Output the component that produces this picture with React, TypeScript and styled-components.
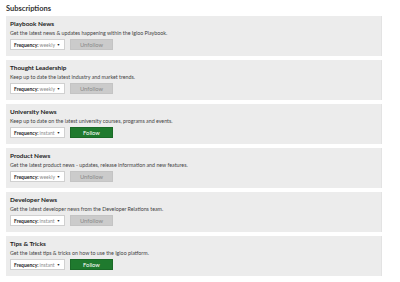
import { FC } from 'react';
import styled, { createGlobalStyle } from 'styled-components';

const Global = createGlobalStyle`
body {
  margin: 0;
  background: #fff;
  font-family: Lato, "Open Sans", sans-serif;
  color: #333;
}
`;

const Page = styled.div`
padding: 4px 6px 6px 6px;
width: 388px;
box-sizing: border-box;
`;

const Heading = styled.h2`
margin: 0 0 3px 0;
font-size: 7.5px;
line-height: 9px;
font-weight: 700;
color: #333;
`;

const List = styled.div`
display: flex;
flex-direction: column;
gap: 4px;
`;

const Card = styled.div`
background: #ececec;
border-right: 1px solid #e3e3e3;
height: 40px;
box-sizing: border-box;
padding: 4px;
display: flex;
flex-direction: column;
`;

const Title = styled.div`
font-size: 6.4px;
font-weight: 700;
line-height: 8px;
color: #222;
`;

const Desc = styled.div`
font-size: 5.3px;
line-height: 7px;
margin-top: 2px;
color: #444;
`;

const Controls = styled.div`
display: flex;
gap: 5px;
margin-top: 2px;
`;

const Select = styled.div`
width: 55px;
height: 11px;
box-sizing: border-box;
background: #fff;
border: 1px solid #d0d0d0;
display: flex;
align-items: center;
padding: 0 3px 0 3px;
font-size: 5px;
color: #222;
b { font-weight: 700; margin-right: 1px; }
span { color: #8a8a8a; }
i { margin-left: auto; margin-right: 1px; font-style: normal; font-size: 3.4px; color: #222; }
`;

const Button = styled.div<{ $follow?: boolean }>`
width: 43px;
height: 11px;
display: flex;
align-items: center;
justify-content: center;
font-size: 5.8px;
background: ${(p) => (p.$follow ? '#1f7a2e' : '#cbcbcb')};
color: ${(p) => (p.$follow ? '#fff' : '#8a8a8a')};
border: 1px solid ${(p) => (p.$follow ? '#1a6a27' : '#c4c4c4')};
box-sizing: border-box;
`;

const items = [
  { title: 'Playbook News', desc: 'Get the latest news & updates happening within the Igloo Playbook.', freq: 'weekly', follow: false },
  { title: 'Thought Leadership', desc: 'Keep up to date the latest industry and market trends.', freq: 'weekly', follow: false },
  { title: 'University News', desc: 'Keep up to date on the latest university courses, programs and events.', freq: 'instant', follow: true },
  { title: 'Product News', desc: 'Get the latest product news - updates, release information and new features.', freq: 'weekly', follow: false },
  { title: 'Developer News', desc: 'Get the latest developer news from the Developer Relations team.', freq: 'instant', follow: false },
  { title: 'Tips & Tricks', desc: 'Get the latest tips & tricks on how to use the Igloo platform.', freq: 'instant', follow: true },
];

const App: FC = () => {
  return (<Page>
    <Global />
    <Heading>Subscriptions</Heading>
    <List>
      {items.map((it) => (
        <Card key={it.title}>
          <Title>{it.title}</Title>
          <Desc>{it.desc}</Desc>
          <Controls>
            <Select><b>Frequency:</b><span>{it.freq}</span><i>▼</i></Select>
            <Button $follow={it.follow}>{it.follow ? 'Follow' : 'Unfollow'}</Button>
          </Controls>
        </Card>
      ))}
    </List>
  </Page>);
};

export default App;
